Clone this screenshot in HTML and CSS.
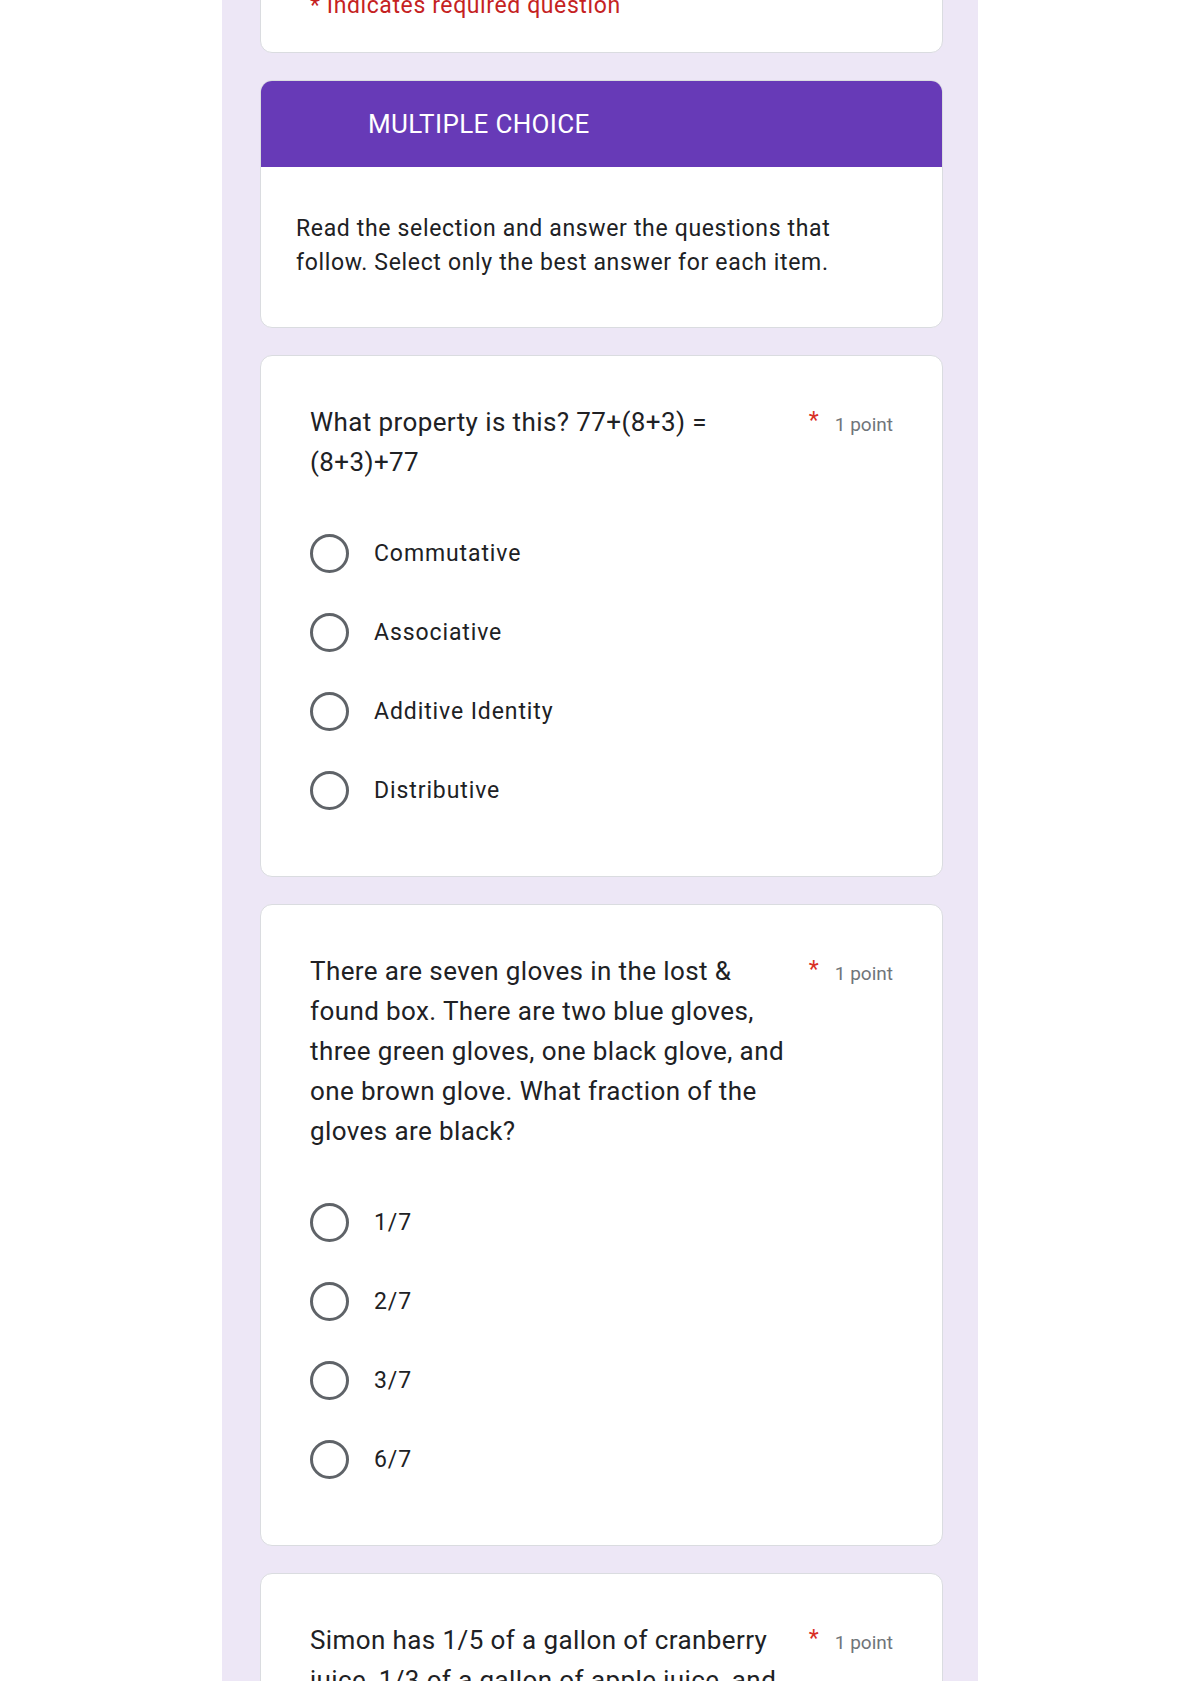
FILE: index.html
```html
<!DOCTYPE html>
<html lang="en">
<head>
<meta charset="utf-8">
<title>Multiple Choice</title>
<link rel="stylesheet" href="styles.css">
</head>
<body>
<div class="page">
  <main class="form">
    <section class="card intro">
      <p class="required-note">* Indicates required question</p>
    </section>

    <section class="card section">
      <header class="section-head">MULTIPLE CHOICE</header>
      <p class="section-desc">Read the selection and answer the questions that follow. Select only the best answer for each item.</p>
    </section>

    <section class="card question">
      <div class="q-head">
        <h2 class="q-title">What property is this? 77+(8+3) = (8+3)+77</h2>
        <div class="q-meta"><span class="req">*</span><span class="pts">1 point</span></div>
      </div>
      <ul class="options">
        <li class="option"><span class="radio"></span><span class="label">Commutative</span></li>
        <li class="option"><span class="radio"></span><span class="label">Associative</span></li>
        <li class="option"><span class="radio"></span><span class="label">Additive Identity</span></li>
        <li class="option"><span class="radio"></span><span class="label">Distributive</span></li>
      </ul>
    </section>

    <section class="card question">
      <div class="q-head">
        <h2 class="q-title">There are seven gloves in the lost &amp; found box. There are two blue gloves, three green gloves, one black glove, and one brown glove. What fraction of the gloves are black?</h2>
        <div class="q-meta"><span class="req">*</span><span class="pts">1 point</span></div>
      </div>
      <ul class="options">
        <li class="option"><span class="radio"></span><span class="label">1/7</span></li>
        <li class="option"><span class="radio"></span><span class="label">2/7</span></li>
        <li class="option"><span class="radio"></span><span class="label">3/7</span></li>
        <li class="option"><span class="radio"></span><span class="label">6/7</span></li>
      </ul>
    </section>

    <section class="card question">
      <div class="q-head">
        <h2 class="q-title">Simon has 1/5 of a gallon of cranberry juice, 1/3 of a gallon of apple juice, and</h2>
        <div class="q-meta"><span class="req">*</span><span class="pts">1 point</span></div>
      </div>
    </section>
  </main>
</div>
</body>
</html>
```

FILE: styles.css
```css
html, body {
  margin: 0;
  padding: 0;
  background: #ffffff;
}

body {
  font-family: Roboto, "Noto Sans", "Liberation Sans", Arial, sans-serif;
  color: #202124;
}

.page {
  height: 1697px;
  overflow: hidden;
}

.form {
  box-sizing: border-box;
  width: 756px;
  height: 1681px;
  margin: 0 auto;
  padding: 0 35px 0 38px;
  background: #ede7f6;
  overflow: hidden;
  display: flex;
  flex-direction: column;
  gap: 27px;
}

.card {
  flex-shrink: 0;
  background: #ffffff;
  border: 1px solid #dadce0;
  border-radius: 12px;
}

/* intro card (top is scrolled off) */
.intro {
  margin-top: -30px;
  padding: 20px 49px 31px;
}

.required-note {
  margin: 0;
  font-size: 23px;
  letter-spacing: 0.6px;
  line-height: 30px;
  color: #c5221f;
}

/* section header card */
.section {
  overflow: hidden;
}

.section-head {
  height: 86px;
  line-height: 86px;
  padding-left: 107px;
  background: #673ab7;
  color: #ffffff;
  font-size: 26px;
  letter-spacing: 0.35px;
  font-weight: 400;
}

.section-desc {
  margin: 0;
  padding: 45px 60px 47px 35px;
  font-size: 23px;
  letter-spacing: 0.66px;
  line-height: 34px;
  color: #202124;
}

/* question cards */
.question {
  padding: 46px 49px 46px 49px;
}

.q-head {
  display: flex;
  align-items: baseline;
}

.q-title {
  flex: 1;
  margin: 0;
  font-size: 26px;
  letter-spacing: 0.4px;
  line-height: 40px;
  font-weight: 400;
  color: #202124;
}

.q-meta {
  flex-shrink: 0;
  margin-left: 16px;
  white-space: nowrap;
}

.req {
  display: inline-block;
  font-size: 23px;
  color: #d93025;
  margin-right: 16px;
  vertical-align: 3px;
}

.pts {
  font-size: 19px;
  color: #70757a;
}

.options {
  list-style: none;
  margin: 32px 0 0;
  padding: 0;
}

.option {
  display: flex;
  align-items: center;
  height: 79px;
  gap: 25px;
}

.radio {
  box-sizing: border-box;
  width: 39px;
  height: 39px;
  border: 3px solid #5f6368;
  border-radius: 50%;
  flex-shrink: 0;
}

.label {
  font-size: 23px;
  letter-spacing: 0.9px;
  color: #202124;
}
```
